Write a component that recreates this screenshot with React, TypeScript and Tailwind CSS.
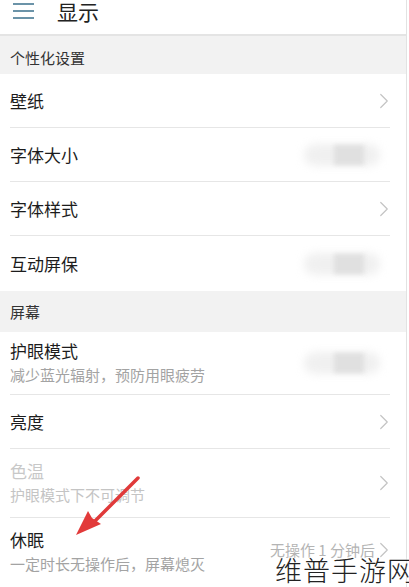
import { ChevronRight } from 'lucide-react';

const font = { fontFamily: '"Noto Sans CJK SC", "Noto Sans", sans-serif' };

function Chevron({ className = '' }: { className?: string }) {
  return <ChevronRight className={`-mr-[7px] h-[26px] w-[26px] text-[#c4c4c4] ${className}`} strokeWidth={1.1} />;
}

// blurred switch, like the smudged toggles in the picture
function Smudge() {
  return (
    <div className="relative mr-[10px] flex h-[26px] w-[76px] items-center justify-center">
      <div className="absolute inset-x-0 h-[22px] rounded-full bg-[#f0f0f0] blur-[4px]" />
      <div className="relative ml-[14px] h-[20px] w-[30px] bg-[#e0e0e0] blur-[2px]" />
    </div>
  );
}

function SectionHeader({ title, className }: { title: string; className: string }) {
  return (
    <div className={`flex items-end bg-[#f2f2f2] px-[10px] text-[15px] text-[#333] ${className}`}>{title}</div>
  );
}

function Row({
  title,
  sub,
  right,
  height,
  dim,
  last
}: {
  title: string;
  sub?: string;
  right?: React.ReactNode;
  height: string;
  dim?: boolean;
  last?: boolean;
}) {
  return (
    <div className={`mx-[10px] mr-[16px] flex items-center justify-between ${last ? '' : 'border-b border-[#e6e6e6]'} ${height}`}>
      <div className="flex flex-col">
        <div className={`text-[17px] leading-[22px] ${dim ? 'text-[#c8c8c8]' : 'text-[#1c1c1c]'}`}>{title}</div>
        {sub && <div className={`mt-[2px] text-[15px] leading-[22px] ${dim ? 'text-[#c4c4c4]' : 'text-[#a3a3a3]'}`}>{sub}</div>}
      </div>
      {right}
    </div>
  );
}

export default function App() {
  return (
    <div className="relative h-[587px] w-[409px] overflow-hidden bg-white" style={font}>
      <div className="h-full w-[407px] border-r border-[#e2e2e2]">
        <div className="flex h-[36px] items-start border-b-2 border-[#e4e4e4] pl-[13px]">
          <div className="mt-[3px] flex w-[21px] flex-col gap-[5px]">
            <div className="h-[2px] bg-[#6b93a8]" />
            <div className="h-[2px] bg-[#6b93a8]" />
            <div className="h-[2px] bg-[#6b93a8]" />
          </div>
          <div className="-mt-[3px] ml-[23px] text-[21px] leading-[28px] text-[#222]">显示</div>
        </div>
        <SectionHeader title="个性化设置" className="h-[38px] pb-[5px]" />
        <Row title="壁纸" height="h-[54px]" right={<Chevron />} />
        <Row title="字体大小" height="h-[54px]" right={<Smudge />} />
        <Row title="字体样式" height="h-[54px]" right={<Chevron />} />
        <Row title="互动屏保" height="h-[55px]" right={<Smudge />} last />
        <SectionHeader title="屏幕" className="h-[41px] pb-[9px]" />
        <Row title="护眼模式" sub="减少蓝光辐射，预防用眼疲劳" height="h-[63px]" right={<Smudge />} />
        <Row title="亮度" height="h-[54px]" right={<Chevron />} />
        <Row title="色温" sub="护眼模式下不可调节" height="h-[69px]" dim right={<Chevron />} />
        <Row
          title="休眠"
          sub="一定时长无操作后，屏幕熄灭"
          height="h-[68px]"
          last
          right={
            <div className="-mt-[4px] flex items-center text-[15px] text-[#b4b4b4]">
              无操作 1 分钟后
              <Chevron className="-ml-[4px]" />
            </div>
          }
        />
      </div>

      <svg className="pointer-events-none absolute left-[68px] top-[470px]" width="80" height="72" viewBox="0 0 80 72">
        <path d="M70 8 L26 52" stroke="#e03a3a" strokeWidth="3.5" strokeLinecap="round" />
        <path d="M8 65 L20 41 L24 48 L33 54 Z" fill="#e23a3a" />
      </svg>

      <div className="absolute bottom-[-1px] right-[-6px] text-[27px] font-light leading-[36px] tracking-[1px] text-[#222] [text-shadow:0_0_3px_white,0_0_3px_white]">
        维普手游网
      </div>
    </div>
  );
}
